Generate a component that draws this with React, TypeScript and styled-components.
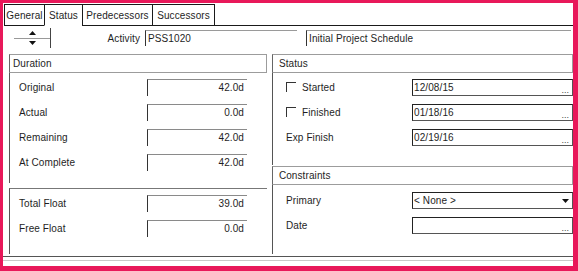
import styled, { createGlobalStyle } from "styled-components";

const GlobalStyle = createGlobalStyle`
  html, body {
    margin: 0;
    padding: 0;
    background: #e8185a;
  }
  body {
    font-family: "Liberation Sans", Arial, sans-serif;
  }
`;

const Frame = styled.div`
  width: 578px;
  height: 271px;
  box-sizing: border-box;
  padding: 3px 5px 5px 3px;
  background: #e8185a;
`;

const Sheet = styled.div`
  width: 570px;
  height: 263px;
  background: #ffffff;
  display: flex;
  flex-direction: column;
  font-size: 10px;
  color: #1e1e1e;
  letter-spacing: 0.1px;
  overflow: hidden;
`;

// TABS
const TabRow = styled.div`
  display: flex;
  height: 23px;
  padding: 1px 0 0 1px;
  box-sizing: border-box;
`;

const Tab = styled.div<{ $w: number; $active?: boolean; $last?: boolean }>`
  width: ${(p) => p.$w}px;
  box-sizing: border-box;
  border-top: 1px solid #1a1a1a;
  border-left: 1px solid #1a1a1a;
  border-right: ${(p) => (p.$last ? "1px solid #1a1a1a" : "none")};
  border-bottom: ${(p) => (p.$active ? "1px solid transparent" : "1px solid #1a1a1a")};
  display: flex;
  align-items: center;
  justify-content: center;
  line-height: 1;
  padding-top: 1px;
`;

const TabFiller = styled.div`
  flex: 1;
  border-bottom: 1px solid #1a1a1a;
`;

// ACTIVITY ROW
const ActivityRow = styled.div`
  display: flex;
  align-items: center;
  height: 20px;
  margin-top: 2px;
  padding-left: 11px;
`;

const Spinner = styled.div`
  width: 37px;
  height: 20px;
  box-sizing: border-box;
  border-right: 1px solid #444;
  display: flex;
  flex-direction: column;
`;

const SpinHalf = styled.div<{ $top?: boolean }>`
  flex: 1;
  display: flex;
  align-items: center;
  justify-content: center;
  border-bottom: ${(p) => (p.$top ? "1px solid #999" : "none")};
`;

const ActivityLabel = styled.div`
  width: 89px;
  text-align: right;
  margin-right: 5px;
`;

const TextField = styled.div<{ $w?: number }>`
  ${(p) => (p.$w ? `width: ${p.$w}px;` : "flex: 1;")}
  height: 16px;
  box-sizing: border-box;
  border-top: 1px solid #9a9a9a;
  border-left: 1px solid #333;
  padding-left: 2px;
  display: flex;
  align-items: center;
  margin-right: ${(p) => (p.$w ? "9px" : "2px")};
`;

// PANELS
const Columns = styled.div`
  display: flex;
  gap: 5px;
  margin-top: 6px;
  padding-left: 6px;
  height: 200px;
`;

const Column = styled.div<{ $w?: number }>`
  ${(p) => (p.$w ? `width: ${p.$w}px;` : "flex: 1;")}
  display: flex;
  flex-direction: column;
`;

const PanelHeader = styled.div`
  height: 19px;
  box-sizing: border-box;
  border: 1px solid #9c9c9c;
  border-left-color: #666;
  padding-left: 3px;
  display: flex;
  align-items: center;
`;

const PanelBody = styled.div<{ $h: number; $top?: boolean; $pt?: number }>`
  height: ${(p) => p.$h}px;
  box-sizing: border-box;
  border-left: 1px solid #555;
  border-top: ${(p) => (p.$top ? "1px solid #777" : "none")};
  padding-top: ${(p) => p.$pt ?? 0}px;
  display: flex;
  flex-direction: column;
`;

const Row = styled.div<{ $indent?: number }>`
  height: 25px;
  flex: none;
  display: flex;
  align-items: center;
  padding-left: ${(p) => p.$indent ?? 9}px;
`;

const Label = styled.div<{ $w: number }>`
  width: ${(p) => p.$w}px;
  flex: none;
  display: flex;
  align-items: center;
`;

const NumberField = styled.div`
  width: 100px;
  height: 17px;
  box-sizing: border-box;
  border-top: 1px solid #8a8a8a;
  border-left: 1px solid #333;
  text-align: right;
  padding-right: 3px;
  line-height: 16px;
`;

const DateField = styled.div`
  width: 161px;
  height: 17px;
  box-sizing: border-box;
  border: 1px solid #555;
  border-top-color: #222;
  border-left-color: #222;
  display: flex;
  align-items: center;
  padding-left: 1px;
`;

const Ellipsis = styled.span`
  margin-left: auto;
  align-self: flex-end;
  font-size: 9px;
  line-height: 9px;
  padding-right: 3px;
  color: #444;
  letter-spacing: 0;
`;

const Caret = styled.span`
  margin-left: auto;
  padding-right: 3px;
  display: flex;
  align-items: center;
`;

const Check = styled.span`
  flex: none;
  width: 10px;
  height: 10px;
  box-sizing: border-box;
  border-top: 1px solid #333;
  border-left: 1px solid #333;
  margin-right: 6px;
`;

const Gap = styled.div<{ $h: number }>`
  height: ${(p) => p.$h}px;
  flex: none;
`;

const Footer = styled.div`
  margin-top: 2px;
  height: 3px;
  border-top: 1px solid #555;
  border-bottom: 1px solid #c8c8c8;
`;

const Tri = ({ down }: { down?: boolean }) => (
  <svg width="7" height="4" viewBox="0 0 7 4">
    <polygon points={down ? "0,0 7,0 3.5,4" : "0,4 7,4 3.5,0"} fill="#111" />
  </svg>
);

const durations = [
  ["Original", "42.0d"],
  ["Actual", "0.0d"],
  ["Remaining", "42.0d"],
  ["At Complete", "42.0d"],
];

const floats = [
  ["Total Float", "39.0d"],
  ["Free Float", "0.0d"],
];

const statusRows = [
  { label: "Started", date: "12/08/15", check: true },
  { label: "Finished", date: "01/18/16", check: true },
  { label: "Exp Finish", date: "02/19/16", check: false },
];

const App = () => {
  return (
    <Frame>
      <GlobalStyle />
      <Sheet>
        <TabRow>
          <Tab $w={40}>General</Tab>
          <Tab $w={38} $active>
            Status
          </Tab>
          <Tab $w={70}>Predecessors</Tab>
          <Tab $w={63} $last>
            Successors
          </Tab>
          <TabFiller />
        </TabRow>

        <ActivityRow>
          <Spinner>
            <SpinHalf $top>
              <Tri />
            </SpinHalf>
            <SpinHalf>
              <Tri down />
            </SpinHalf>
          </Spinner>
          <ActivityLabel>Activity</ActivityLabel>
          <TextField $w={152}>PSS1020</TextField>
          <TextField>Initial Project Schedule</TextField>
        </ActivityRow>

        <Columns>
          <Column $w={258}>
            <PanelHeader>Duration</PanelHeader>
            <PanelBody $h={110} $pt={2}>
              {durations.map(([l, v]) => (
                <Row key={l}>
                  <Label $w={128}>{l}</Label>
                  <NumberField>{v}</NumberField>
                </Row>
              ))}
            </PanelBody>
            <Gap $h={5} />
            <PanelBody $h={66} $top $pt={2}>
              {floats.map(([l, v]) => (
                <Row key={l}>
                  <Label $w={128}>{l}</Label>
                  <NumberField>{v}</NumberField>
                </Row>
              ))}
            </PanelBody>
          </Column>

          <Column>
            <PanelHeader>&nbsp;Status</PanelHeader>
            <PanelBody $h={93} $pt={2}>
              {statusRows.map((r) => (
                <Row key={r.label} $indent={13}>
                  <Label $w={126}>
                    {r.check && <Check />}
                    {r.label}
                  </Label>
                  <DateField>
                    {r.date}
                    <Ellipsis>...</Ellipsis>
                  </DateField>
                </Row>
              ))}
            </PanelBody>
            <Gap $h={1} />
            <PanelHeader>&nbsp;Constraints</PanelHeader>
            <PanelBody $h={69} $pt={3}>
              <Row $indent={13}>
                <Label $w={126}>Primary</Label>
                <DateField>
                  &lt; None &gt;
                  <Caret>
                    <Tri down />
                  </Caret>
                </DateField>
              </Row>
              <Row $indent={13}>
                <Label $w={126}>Date</Label>
                <DateField>
                  <Ellipsis>...</Ellipsis>
                </DateField>
              </Row>
            </PanelBody>
          </Column>
        </Columns>
        <Footer />
      </Sheet>
    </Frame>
  );
};

export default App;
